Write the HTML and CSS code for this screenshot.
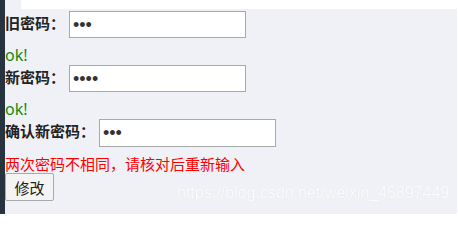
FILE: index.html
```html
<!DOCTYPE html>
<html lang="zh">
<head>
<meta charset="utf-8">
<title>修改密码</title>
<link rel="stylesheet" href="styles.css">
</head>
<body>
<div class="page">
  <aside class="sidebar"></aside>
  <main class="main">
    <div class="topbar"></div>
    <form class="form">
      <div class="row">
        <label class="label">旧密码：</label>
        <input class="field" type="password" value="123">
      </div>
      <div class="msg ok">ok!</div>
      <div class="row">
        <label class="label">新密码：</label>
        <input class="field" type="password" value="1234">
      </div>
      <div class="msg ok">ok!</div>
      <div class="row row-last">
        <label class="label">确认新密码：</label>
        <input class="field" type="password" value="123">
      </div>
      <div class="msg err">两次密码不相同，请核对后重新输入</div>
      <button class="btn" type="button">修改</button>
    </form>
    <div class="watermark">https://blog.csdn.net/weixin_45897449</div>
  </main>
</div>
</body>
</html>
```
FILE: styles.css
```css
html, body {
  margin: 0;
  padding: 0;
  height: 100%;
}
body {
  font-family: "Noto Sans", "Noto Sans CJK SC", sans-serif;
  color: #222;
}
.page {
  display: flex;
  height: 214px;
  overflow: hidden;
}
.sidebar {
  width: 5px;
  flex: none;
  background: #27343f;
}
.main {
  flex: 1;
  position: relative;
  background: #f0f1f6;
  border-right: 1px solid #fff;
}
.topbar {
  height: 9px;
  margin-left: 16px;
  background: #fff;
}
.form {
  margin: 0;
  padding-top: 2px;
}
.row {
  display: flex;
  align-items: center;
  gap: 4px;
  height: 27px;
}
.row-last {
  height: 28px;
}
.label {
  font-family: "Noto Sans CJK SC", sans-serif;
  font-size: 15px;
  font-weight: 700;
  line-height: 20px;
  color: #222;
  padding-bottom: 4px;
}
.field {
  width: 177px;
  height: 100%;
  box-sizing: border-box;
  margin: 0;
  padding: 1px 3px 0;
  border: 1px solid #a9a9a9;
  background: #fff;
  font-family: "Liberation Sans", sans-serif;
  font-size: 18px;
  letter-spacing: 0;
  color: #333;
  outline: none;
}
.msg {
  height: 27px;
  box-sizing: border-box;
  padding-top: 7px;
  line-height: 20px;
  font-size: 16px;
}
.ok {
  color: #138a13;
}
.err {
  height: 26px;
  color: #ff0000;
  font-family: "Noto Sans CJK SC", sans-serif;
  font-size: 15px;
}
.btn {
  display: block;
  width: 49px;
  height: 28px;
  margin: 0;
  padding: 0;
  font-family: "Noto Sans CJK SC", sans-serif;
  font-size: 15px;
  color: #222;
  background: #f4f4f4;
  border: 1px solid #a9a9a9;
  border-radius: 2px;
}
.watermark {
  position: absolute;
  left: 172px;
  top: 184px;
  font-family: "Liberation Sans", sans-serif;
  font-size: 16px;
  color: #fbfbfd;
  text-shadow: 0 0 1px #dcdde3;
  white-space: nowrap;
}
```
